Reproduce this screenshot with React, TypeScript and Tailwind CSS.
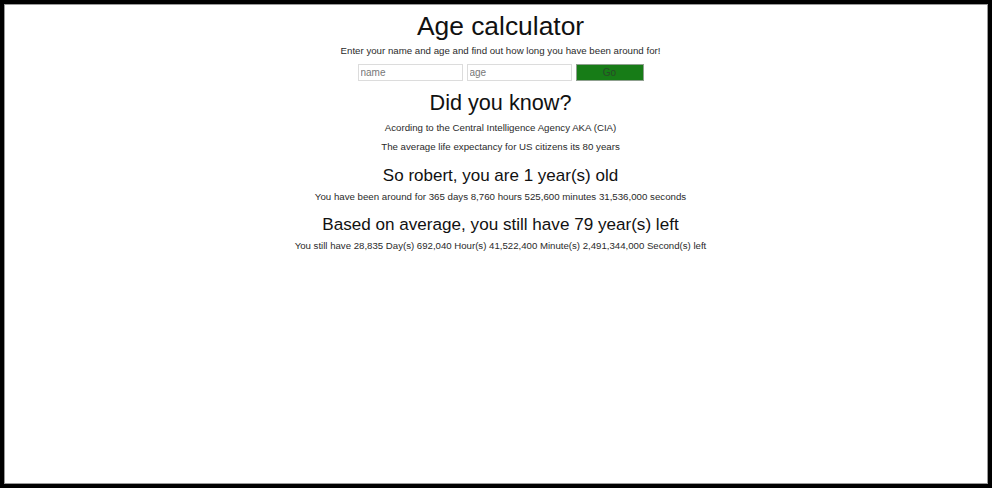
import React from "react";

export default function App() {
  const font = { fontFamily: '"Liberation Sans", Arial, Helvetica, sans-serif' };
  return (
    <div className="w-[1000px] h-[489px] bg-white" style={font}>
      <div className="w-[992px] h-[488px] border-4 border-black">
        <div className="h-full border border-[#9a9a9a] pl-[9px] flex flex-col items-center text-[#111]">
          <h1 className="mt-[6px] text-[26.4px] leading-[30px] font-normal">Age calculator</h1>
          <p className="mt-[3px] text-[9.7px] leading-[14px] text-[#2a2a2a]">
            Enter your name and age and find out how long you have been around for!
          </p>
          <div className="mt-[6px] flex gap-[4px] h-[17px]">
            <input
              className="w-[105px] h-[17px] border border-[#dcdcdc] px-[2px] text-[10px] placeholder:text-[#777] outline-none"
              placeholder="name"
              style={font}
            />
            <input
              className="w-[105px] h-[17px] border border-[#dcdcdc] px-[2px] text-[10px] placeholder:text-[#777] outline-none"
              placeholder="age"
              style={font}
            />
            <button
              className="w-[68px] h-[17px] bg-[#177c17] border border-[#8fa08f] text-[10px] text-[#284a28] leading-[15px]"
              style={font}
            >
              Go
            </button>
          </div>
          <h2 className="mt-[9px] text-[21.65px] leading-[26px] font-normal">Did you know?</h2>
          <p className="mt-[5px] text-[9.7px] leading-[14px] text-[#2a2a2a]">
            Acording to the Central Intelligence Agency AKA (CIA)
          </p>
          <p className="mt-[5px] text-[9.7px] leading-[14px] text-[#2a2a2a]">
            The average life expectancy for US citizens its 80 years
          </p>
          <h3 className="mt-[12px] text-[17px] leading-[20px] font-normal">So robert, you are 1 year(s) old</h3>
          <p className="mt-[4px] text-[9.7px] leading-[14px] text-[#2a2a2a]">
            You have been around for 365 days 8,760 hours 525,600 minutes 31,536,000 seconds
          </p>
          <h3 className="mt-[11px] text-[17.1px] leading-[20px] font-normal">
            Based on average, you still have 79 year(s) left
          </h3>
          <p className="mt-[4px] text-[9.65px] leading-[14px] text-[#2a2a2a]">
            You still have 28,835 Day(s) 692,040 Hour(s) 41,522,400 Minute(s) 2,491,344,000 Second(s) left
          </p>
        </div>
      </div>
    </div>
  );
}
